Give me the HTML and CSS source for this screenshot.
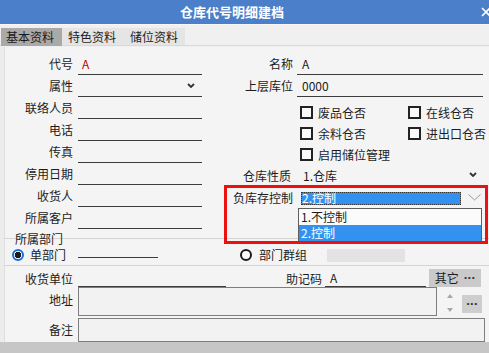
FILE: index.html
```html
<!DOCTYPE html>
<html lang="zh">
<head>
<meta charset="utf-8">
<title>仓库代号明细建档</title>
<link rel="stylesheet" href="styles.css">
</head>
<body>
<div class="window">
  <div class="titlebar">
    <span class="title">仓库代号明细建档</span>
    <svg class="close" width="10" height="10" viewBox="0 0 10 10"><path d="M1 1 L9 9 M9 1 L1 9" stroke="#fff" stroke-width="1.6" fill="none"/></svg>
  </div>
  <div class="tabs">
    <div class="tab active">基本资料</div>
    <div class="tab-rest">
      <div class="tab">特色资料</div>
      <div class="tab">储位资料</div>
    </div>
  </div>
  <div class="gap"></div>
  <div class="main">
    <div class="strip"></div>
    <div class="panel">
      <div class="upper">
        <div class="col-left">
          <div class="frow"><span class="lbl">代号</span><span class="fld red">A</span></div>
          <div class="frow"><span class="lbl">属性</span><span class="fld sel"><span></span><svg class="chev" width="8" height="5" viewBox="0 0 8 5"><polyline points="1,1 4,4 7,1" fill="none" stroke="#333" stroke-width="1.8"/></svg></span></div>
          <div class="frow"><span class="lbl">联络人员</span><span class="fld"></span></div>
          <div class="frow"><span class="lbl">电话</span><span class="fld"></span></div>
          <div class="frow"><span class="lbl">传真</span><span class="fld"></span></div>
          <div class="frow"><span class="lbl">停用日期</span><span class="fld"></span></div>
          <div class="frow"><span class="lbl">收货人</span><span class="fld"></span></div>
          <div class="frow"><span class="lbl">所属客户</span><span class="fld"></span></div>
        </div>
        <div class="col-right">
          <div class="rrow"><span class="lbl">名称</span><span class="fld val">A</span></div>
          <div class="rrow"><span class="lbl">上层库位</span><span class="fld val">0000</span></div>
          <div class="checks">
            <label class="chk"><span class="box"></span>废品仓否</label>
            <label class="chk"><span class="box"></span>在线仓否</label>
            <label class="chk"><span class="box"></span>余料仓否</label>
            <label class="chk"><span class="box"></span>进出口仓否</label>
            <label class="chk"><span class="box"></span>启用储位管理</label>
          </div>
          <div class="rrow nature"><span class="lbl">仓库性质</span><span class="plain sel"><span>1.仓库</span><svg class="chev" width="8" height="5" viewBox="0 0 8 5"><polyline points="1,1 4,4 7,1" fill="none" stroke="#333" stroke-width="1.8"/></svg></span></div>
          <div class="rrow neg"><span class="lbl">负库存控制</span>
            <span class="negfield">
              <span class="negsel">2.控制</span>
              <svg class="thinchev" width="13" height="7" viewBox="0 0 13 7"><polyline points="0.5,0.5 6.5,6 12.5,0.5" fill="none" stroke="#9a9a9a" stroke-width="1"/></svg>
              <span class="droplist">
                <span class="opt">1.不控制</span>
                <span class="opt on">2.控制</span>
              </span>
            </span>
          </div>
        </div>
      </div>
      <div class="dept">
        <div class="dept-cap">所属部门</div>
        <div class="dept-row">
          <div class="dept-cell">
            <span class="radio on"></span><span class="rlbl">单部门</span><span class="dept-line"></span>
          </div>
          <div class="dept-cell right">
            <span class="radio"></span><span class="rlbl2">部门群组</span><span class="dept-gray"></span>
          </div>
        </div>
      </div>
      <div class="lrow a">
        <span class="lbl">收货单位</span>
        <span class="lfld w1"></span>
        <span class="lbl2">助记码</span>
        <span class="lfld w2">A</span>
        <span class="btn other">其它<span class="dotstxt">···</span></span>
      </div>
      <div class="lrow b">
        <span class="lbl">地址</span>
        <span class="box-area addr"></span>
        <span class="arrows">
          <svg width="6" height="4" viewBox="0 0 6 4"><polygon points="0,4 3,0 6,4" fill="#a8a8a8"/></svg>
          <svg width="6" height="4" viewBox="0 0 6 4"><polygon points="0,0 3,4 6,0" fill="#a8a8a8"/></svg>
        </span>
        <span class="btn dots"><span class="dotstxt">···</span></span>
      </div>
      <div class="lrow c">
        <span class="lbl">备注</span>
        <span class="box-area memo"></span>
      </div>
    </div>
  </div>
  <div class="footer"></div>
  <div class="highlight"></div>
</div>
</body>
</html>
```

FILE: styles.css
```css
* { box-sizing: border-box; }
html, body { margin: 0; padding: 0; }
body {
  width: 489px;
  height: 353px;
  overflow: hidden;
  font-family: "Noto Sans CJK SC", "Noto Sans", sans-serif;
  font-size: 12px;
  color: #1c1c1c;
  background: #f0f0f0;
}
.window { position: relative; width: 489px; height: 353px; overflow: hidden; }

.titlebar {
  height: 24px;
  background: #4b7fc9;
  display: flex;
  align-items: center;
  padding-left: 180px;
}
.title { color: #fff; font-size: 13px; font-weight: bold; line-height: 24px; letter-spacing: 0; }
.close { margin-left: auto; margin-right: -2px; }

.tabs {
  height: 22px;
  padding-top: 3px;
  display: flex;
  background: #f0f0f0;
  border-top: 1px solid #f7f7f7;
  border-bottom: 1px solid #d9d9d9;
}
.tab { height: 18px; line-height: 18px; padding-left: 6px; white-space: nowrap; }
.tab.active { margin-left: 1px; width: 61px; padding-left: 5px; background: #a9a9a9; color: #1a1a1a; }
.tab-rest { display: flex; background: #e5e5e5; }
.tab-rest .tab:first-child { width: 62px; }
.tab-rest .tab:last-child { width: 61px; }

.gap { height: 1px; background: #f0f0f0; }

.main { display: flex; height: 295px; }
.strip { width: 4px; background: #ececec; }
.panel {
  flex: 1;
  border-left: 1px solid #dedede;
  background: #f4f4f4;
  overflow: hidden;
}

.upper { display: grid; grid-template-columns: 220px 264px; padding-top: 6px; }

.lbl { text-align: right; line-height: 22px; white-space: nowrap; }

.frow { display: grid; grid-template-columns: 68px 124px; column-gap: 5px; height: 22px; }
.rrow { display: grid; grid-template-columns: 68px 186px; column-gap: 4px; height: 22px; }

.fld {
  height: 22px;
  border-bottom: 1px solid #3c3c3c;
  display: flex;
  align-items: center;
  padding: 0 4px;
  line-height: 16px;
}
.fld.red { color: #c00000; }
.fld.val { padding-left: 5px; }
.sel { justify-content: space-between; }
.frow .chev { margin-right: 3px; }

.checks {
  margin-top: 5px;
  padding-left: 75px;
  display: grid;
  grid-template-columns: 108px auto;
  grid-auto-rows: 21px;
}
.chk { display: flex; align-items: center; white-space: nowrap; }
.box {
  width: 13px; height: 13px;
  border: 2px solid #222;
  background: #fafafa;
  margin-right: 5px;
}

.nature .lbl { padding-right: 2px; }
.plain { display: flex; align-items: center; padding-left: 6px; padding-right: 6px; height: 22px; line-height: 16px; }
.plain .chev { margin-top: -4px; }

.negfield { position: relative; display: flex; align-items: center; height: 22px; }
.negsel {
  margin-left: 4px;
  width: 160px;
  height: 13px;
  line-height: 12px;
  background: #3392f0;
  color: #fff;
  padding-left: 1px;
  outline: 1px dotted #333;
  outline-offset: -1px;
}
.thinchev { margin-left: 7px; margin-top: -1px; }

.droplist {
  position: absolute;
  left: 1px;
  top: 21px;
  width: 184px;
  height: 33px;
  border: 1px solid #5e5e5e;
  background: #fbfbfb;
  display: flex;
  flex-direction: column;
  z-index: 3;
}
.opt { height: 16px; line-height: 16px; padding-left: 2px; color: #1c1c1c; }
.opt.on { background: #3392f0; color: #fff; margin-left: 0; }

.dept {
  margin-top: 9px;
  border-top: 1px solid #d4d4d4;
  border-bottom: 1px solid #d4d4d4;
}
.dept-cap { height: 12px; line-height: 12px; margin-top: -6px; padding-left: 10px; }
.dept-row { height: 20px; display: grid; grid-template-columns: 220px 1fr; }
.dept-cell { display: flex; align-items: center; }
.radio {
  width: 12px; height: 12px;
  border-radius: 50%;
  border: 2px solid #1b1b1b;
  background: #fafafa;
  flex: none;
  margin-left: 15px;
}
.radio.on {
  margin-left: 7px;
  border-color: #1a6fd6;
  background: radial-gradient(circle, #1b1b1b 0 3px, #fafafa 3.5px);
}
.rlbl { margin-left: 6px; line-height: 14px; }
.rlbl2 { margin-left: 7px; line-height: 14px; }
.dept-line {
  align-self: flex-start;
  width: 80px;
  height: 13px;
  margin-left: 12px;
  border-bottom: 1px solid #3c3c3c;
}
.dept-gray { width: 78px; height: 13px; margin-left: 20px; background: #e3e3e3; }

.lrow { display: flex; }
.lrow .lbl { width: 68px; flex: none; }
.lrow.a { height: 21px; }
.lrow.a .lbl { line-height: 19px; padding-top: 3px; }
.lfld { height: 21px; border-bottom: 1px solid #3c3c3c; display: flex; align-items: center; line-height: 16px; padding-top: 3px; }
.lfld.w1 { width: 148px; margin-left: 5px; }
.lbl2 { width: 96px; text-align: right; line-height: 19px; padding-top: 3px; white-space: nowrap; }
.lfld.w2 { width: 101px; margin-left: 3px; padding-left: 5px; }
.btn { background: #cacaca; color: #1c1c1c; display: flex; align-items: center; justify-content: center; white-space: nowrap; }
.btn.other { width: 52px; height: 18px; margin-left: 3px; margin-top: 3px; line-height: 16px; }
.dotstxt {
  font-family: "Liberation Sans", "DejaVu Sans", sans-serif;
  font-weight: bold;
  font-size: 13px;
  letter-spacing: -0.5px;
  line-height: 12px;
  color: #333;
}
.btn.other .dotstxt { margin-left: 5px; }

.lrow.b { height: 29px; }
.lrow.b .lbl { line-height: 14px; padding-top: 6px; }
.box-area { border: 1px solid #7e7e7e; background: #f2f2f2; margin-left: 5px; }
.addr { width: 359px; height: 29px; }
.arrows { width: 25px; display: flex; flex-direction: column; align-items: center; padding-top: 7px; gap: 10px; padding-left: 0; }
.arrows svg { display: block; }
.btn.dots { width: 20px; height: 18px; margin-top: 8px; background: #cecece; line-height: 12px; }

.lrow.c { height: 24px; margin-top: 2px; }
.lrow.c .lbl { line-height: 24px; }
.memo { width: 407px; height: 24px; }

.footer { height: 11px; background: #c6c6c6; }

.highlight {
  position: absolute;
  left: 224px;
  top: 185px;
  width: 264px;
  height: 59px;
  border: 3px solid #ec1111;
  pointer-events: none;
  z-index: 5;
}
```
